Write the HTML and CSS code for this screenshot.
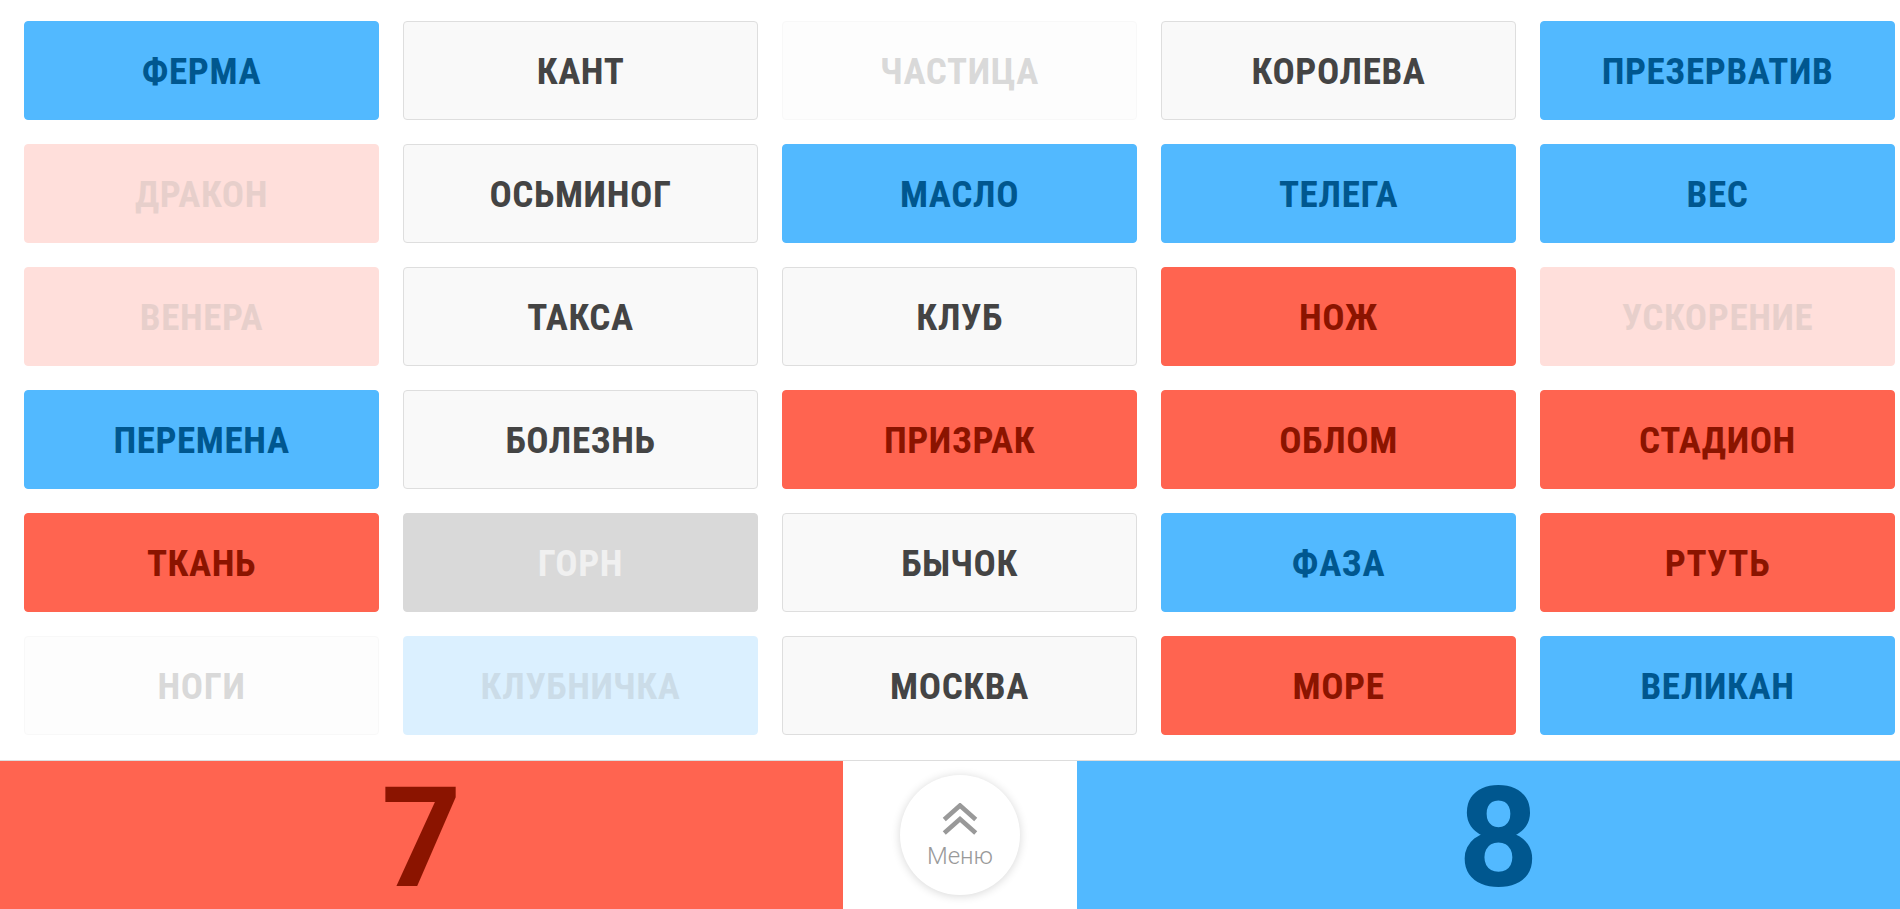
FILE: index.html
```html
<!DOCTYPE html>
<html lang="ru">
<head>
<meta charset="utf-8">
<title>Кодовые имена</title>
<link rel="stylesheet" href="styles.css">
</head>
<body>
<div class="page">
  <div class="board">
    <div class="card blue">ФЕРМА</div>
    <div class="card neutral">КАНТ</div>
    <div class="card neutral faded">ЧАСТИЦА</div>
    <div class="card neutral">КОРОЛЕВА</div>
    <div class="card blue">ПРЕЗЕРВАТИВ</div>

    <div class="card red faded">ДРАКОН</div>
    <div class="card neutral">ОСЬМИНОГ</div>
    <div class="card blue">МАСЛО</div>
    <div class="card blue">ТЕЛЕГА</div>
    <div class="card blue">ВЕС</div>

    <div class="card red faded">ВЕНЕРА</div>
    <div class="card neutral">ТАКСА</div>
    <div class="card neutral">КЛУБ</div>
    <div class="card red">НОЖ</div>
    <div class="card red faded">УСКОРЕНИЕ</div>

    <div class="card blue">ПЕРЕМЕНА</div>
    <div class="card neutral">БОЛЕЗНЬ</div>
    <div class="card red">ПРИЗРАК</div>
    <div class="card red">ОБЛОМ</div>
    <div class="card red">СТАДИОН</div>

    <div class="card red">ТКАНЬ</div>
    <div class="card black">ГОРН</div>
    <div class="card neutral">БЫЧОК</div>
    <div class="card blue">ФАЗА</div>
    <div class="card red">РТУТЬ</div>

    <div class="card neutral faded">НОГИ</div>
    <div class="card blue faded">КЛУБНИЧКА</div>
    <div class="card neutral">МОСКВА</div>
    <div class="card red">МОРЕ</div>
    <div class="card blue">ВЕЛИКАН</div>
  </div>

  <div class="scorebar">
    <div class="score score-red"><span class="digit">7</span></div>
    <div class="menu-slot">
      <div class="menu-btn">
        <svg class="menu-icon" width="36" height="32" viewBox="0 0 36 32" aria-hidden="true">
          <polyline points="4,15 18,2.5 32,15" fill="none" stroke="#999999" stroke-width="4.6" stroke-linecap="square"/>
          <polyline points="4,28.5 18,16 32,28.5" fill="none" stroke="#999999" stroke-width="4.6" stroke-linecap="square"/>
        </svg>
        <span class="menu-label">Меню</span>
      </div>
    </div>
    <div class="score score-blue"><span class="digit">8</span></div>
  </div>
</div>
</body>
</html>
```

FILE: styles.css
```css
* {
  box-sizing: border-box;
}

html, body {
  margin: 0;
  padding: 0;
  background: #ffffff;
  overflow: hidden;
}

.page {
  width: 1900px;
  height: 909px;
  display: flex;
  flex-direction: column;
}

.board {
  display: grid;
  grid-template-columns: repeat(5, 355px);
  grid-auto-rows: 99px;
  column-gap: 24px;
  row-gap: 24px;
  padding: 21px 0 0 24px;
}

.card {
  display: flex;
  align-items: center;
  justify-content: center;
  border-radius: 4px;
  border: 1px solid transparent;
  font-family: "Roboto Condensed", Roboto, "Liberation Sans", sans-serif;
  font-weight: 700;
  font-size: 37px;
  letter-spacing: 0.6px;
  line-height: 1;
  padding-top: 1px;
}

.card.blue {
  background: #52b9ff;
  border-color: #52b9ff;
  color: #00578f;
}

.card.red {
  background: #ff6450;
  border-color: #ff6450;
  color: #8b1400;
}

.card.neutral {
  background: #f9f9f9;
  border-color: #dedede;
  color: #444444;
}

.card.black {
  background: #d9d9d9;
  border-color: #d9d9d9;
  color: #f0f0f0;
}

.card.faded {
  opacity: 0.2;
}

.scorebar {
  margin-top: 25px;
  flex: 1;
  display: flex;
  border-top: 1px solid #dddddd;
}

.score {
  display: flex;
  align-items: center;
  justify-content: center;
  padding-top: 6px;
}

.digit {
  font-family: Roboto, "Liberation Sans", sans-serif;
  font-weight: 700;
  font-size: 140px;
  line-height: 110px;
}

.score-red {
  width: 843px;
  background: #ff6450;
  color: #8b1400;
}

.score-blue {
  flex: 1;
  background: #52b9ff;
  color: #00578f;
  padding-left: 20px;
}

.menu-slot {
  width: 234px;
  display: flex;
  align-items: center;
  justify-content: center;
  background: #ffffff;
}

.menu-btn {
  width: 120px;
  height: 120px;
  border-radius: 50%;
  background: #ffffff;
  box-shadow: 0 1px 10px rgba(0, 0, 0, 0.16);
  display: flex;
  flex-direction: column;
  align-items: center;
  justify-content: center;
  gap: 9px;
}

.menu-icon {
  display: block;
}

.menu-label {
  font-family: Roboto, "Liberation Sans", sans-serif;
  font-weight: 300;
  font-size: 24px;
  line-height: 1;
  color: #999999;
}
```
